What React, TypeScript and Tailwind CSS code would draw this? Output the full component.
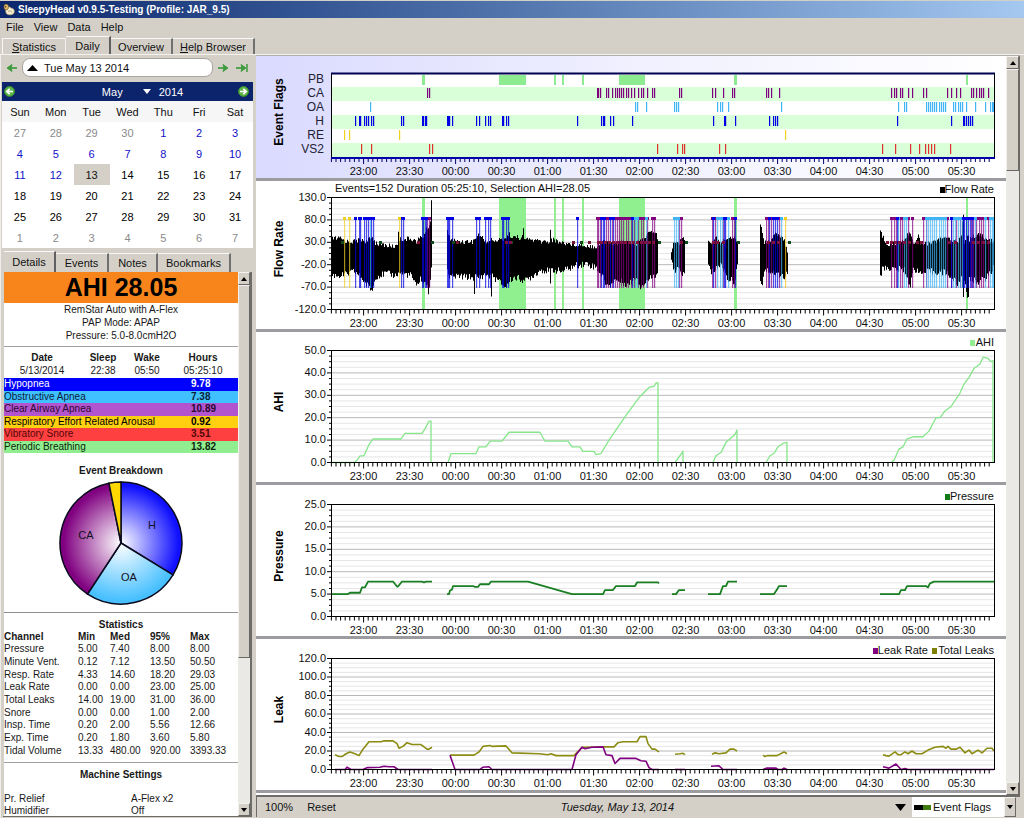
import React from "react";

type Point = [number, number];

const PLOT_LEFT = 75;
const PLOT_RIGHT = 738;
const FONT = "Liberation Sans, Arial, sans-serif";

const HOURS = [
  "23:00", "23:30", "00:00", "00:30", "01:00", "01:30", "02:00",
  "02:30", "03:00", "03:30", "04:00", "04:30", "05:00", "05:30",
];

const breathing: Point[] = [
  [166, 169], [243, 270], [298, 300], [306, 308], [326, 328], [363, 389], [478, 481], [710, 712],
];

const events = {
  CA: [
    171, 173, 341, 342, 344, 350, 352, 356, 359, 361, 363, 365, 367, 370, 372, 375, 378, 382, 385, 387, 391, 396,
    398, 423, 425, 456, 459, 467, 476, 478, 510, 512, 515, 523, 635, 638, 640, 644, 646, 652, 656, 667, 670, 691,
    695, 700, 704, 715, 717, 720, 723, 725, 727, 732,
  ],
  OA: [
    114, 379, 381, 390, 418, 420, 422, 461, 464, 466, 472, 525, 642, 648, 650, 670, 672, 674, 676, 678, 680, 683,
    685, 687, 689, 697, 699, 702, 704, 706, 710, 719, 729, 734, 736, 737,
  ],
  H: [
    99, 103, 104, 108, 110, 112, 115, 117, 145, 147, 166, 167, 169, 170, 191, 192, 193, 196, 220, 223, 229, 232,
    234, 246, 247, 250, 252, 321, 345, 347, 348, 354, 357, 376, 457, 468, 469, 479, 513, 517, 519, 521, 641, 695,
    707, 708, 710, 712, 714, 716,
  ],
  RE: [88, 93, 143, 529],
  VS2: [
    105, 115, 173, 176, 401, 421, 426, 428, 463, 469, 626, 639, 654, 663, 669, 672, 675, 678, 694,
  ],
};

const colors = { CA: "#800080", OA: "#40b4f5", H: "#0000e6", RE: "#f0d020", VS2: "#e03030" };

const snoreMarks = [
  161, 200, 249, 253, 316, 332, 341, 344, 348, 352, 356, 360, 364, 368, 372, 376, 380, 384, 388, 392, 396, 424, 456, 460,
  466, 511, 516, 521, 630, 634, 638, 642, 647, 652, 660, 664, 692, 698, 716, 721, 726, 731,
];
const leakMarks = [85, 123, 175, 196, 254, 324, 402, 429, 481, 532];

const waveform: [number, number, number][][] = [
  [
    [75, 57, 96], [84, 57, 96], [90, 60, 95], [98, 60, 92], [105, 58, 98], [110, 60, 105], [116, 56, 111],
    [119, 61, 97], [130, 64, 94], [139, 65, 96], [141, 62, 94], [142, 49, 95], [143, 58, 93], [155, 57, 96],
    [160, 60, 108], [164, 56, 98], [167, 55, 106], [169, 50, 100], [172, 45, 112], [174, 40, 103], [175, 18, 90],
    [176, 18, 90],
  ],
  [
    [191, 50, 90], [193, 56, 98], [200, 60, 97], [217, 60, 98], [218, 56, 117], [219, 58, 97], [222, 53, 98],
    [230, 60, 95], [234, 60, 98], [235, 56, 114], [236, 60, 97], [245, 58, 104], [250, 56, 108], [253, 53, 101],
    [258, 56, 98], [266, 56, 100], [267, 48, 100], [268, 57, 102], [285, 60, 90], [293, 60, 92], [294, 48, 107],
    [295, 58, 90], [305, 61, 92], [320, 63, 86], [330, 64, 84], [340, 65, 88], [345, 60, 95], [352, 60, 108],
    [358, 62, 100], [372, 60, 105], [380, 62, 97], [384, 60, 107], [392, 52, 100], [399, 50, 95], [402, 60, 90],
  ],
  [[415, 70, 80], [417, 60, 92], [423, 62, 90], [427, 54, 95], [429, 58, 93]],
  [[452, 58, 86], [455, 62, 93], [460, 56, 88], [465, 62, 85], [472, 55, 100], [478, 56, 102], [482, 62, 80]],
  [
    [504, 44, 100], [506, 50, 104], [508, 60, 90], [515, 58, 92], [520, 52, 95], [526, 56, 95], [528, 60, 100],
    [532, 72, 90],
  ],
  [
    [624, 50, 96], [626, 54, 90], [630, 62, 88], [640, 62, 90], [648, 58, 90], [654, 50, 107], [657, 62, 90],
    [662, 54, 90], [664, 62, 95], [670, 62, 92], [690, 56, 93], [702, 60, 105], [705, 52, 98], [707, 32, 117],
    [708, 60, 100], [712, 55, 120], [713, 58, 100], [722, 52, 102], [730, 58, 98], [738, 60, 88],
  ],
];

function jitter(n: number) {
  const v = Math.sin(n * 12.9898) * 43758.5453;
  return v - Math.floor(v);
}

function wavePath(keys: [number, number, number][]) {
  const top: string[] = [];
  const bottom: string[] = [];
  for (let i = 0; i < keys.length - 1; i++) {
    const [x0, t0, b0] = keys[i];
    const [x1, t1, b1] = keys[i + 1];
    for (let x = x0; x < x1; x++) {
      const k = (x - x0) / (x1 - x0);
      const t = t0 + (t1 - t0) * k + jitter(x) * 5 - 2;
      const b = b0 + (b1 - b0) * k - jitter(x + 500) * 7 + 2;
      top.push(`${x},${t.toFixed(1)} ${x + 1},${t.toFixed(1)}`);
      bottom.unshift(`${x + 1},${b.toFixed(1)} ${x},${b.toFixed(1)}`);
    }
  }
  return top.concat(bottom).join(" ");
}

const ahi: Point[][] = [
  [[75, 0], [98, 0], [101, 1], [104, 3], [108, 3], [113, 8], [117, 10.5], [145, 10.5], [149, 13], [166, 13], [169, 15], [173, 18.5], [175, 18.5], [175, 0]],
  [[192, 0], [195, 4], [220, 4], [223, 7], [230, 7], [234, 9.5], [246, 9.5], [253, 13.5], [284, 13.5], [289, 9.5], [312, 9.5], [316, 7], [324, 7], [327, 5], [338, 5], [340, 3.5], [345, 4], [353, 10], [370, 21], [383, 29], [393, 33.5], [398, 34], [400, 35.5], [402, 35.5], [402, 0]],
  [[419, 0], [427, 5], [427, 0]],
  [[457, 0], [460, 3], [465, 4.5], [470, 9], [479, 12.5], [481, 14.5], [481, 0]],
  [[510, 0], [514, 3], [518, 4], [522, 7], [527, 8.5], [531, 9], [531, 0]],
  [[635, 0], [638, 1], [643, 6], [647, 7], [651, 10.5], [658, 11.5], [667, 11.5], [673, 14], [680, 20], [684, 20], [689, 23], [695, 25], [704, 31], [708, 35], [713, 38], [718, 42], [724, 44], [727, 47], [732, 46.5], [735, 45], [737, 45.5], [737, 0]],
];

const pressure: Point[][] = [
  [[75, 5], [92, 5], [94, 5.3], [104, 5.3], [106, 6.5], [109, 6.5], [112, 7.8], [137, 7.8], [141, 6.7], [142, 6.7], [146, 7.8], [166, 7.8], [168, 7.6], [170, 7.8], [176, 7.8]],
  [[191, 5], [193, 5], [194, 5.8], [196, 6], [197, 6.8], [217, 6.8], [219, 6.6], [222, 6.6], [224, 7.2], [233, 7.2], [235, 7.8], [272, 7.8], [316, 5], [347, 5], [349, 5.9], [357, 5.9], [360, 6.8], [379, 6.8], [381, 7.6], [402, 7.6], [403, 7.4]],
  [[416, 5], [420, 5], [423, 5.9], [429, 5.9]],
  [[452, 5], [464, 5], [467, 6.8], [470, 6.8], [472, 7.8], [481, 7.8]],
  [[504, 5], [518, 5], [521, 6], [523, 6.8], [531, 6.8]],
  [[624, 5], [643, 5], [645, 5.9], [649, 5.9], [651, 6.8], [670, 6.8], [672, 6.5], [674, 7.4], [678, 7.8], [738, 7.8]],
];

const totalLeaks: Point[][] = [
  [[79, 16], [83, 14], [86, 14], [90, 17], [94, 19], [99, 17], [103, 15], [107, 22], [113, 30], [125, 30], [128, 31], [137, 31], [141, 28], [143, 23], [147, 25], [151, 29], [156, 27], [165, 27], [171, 22], [173, 22], [176, 24]],
  [[194, 15.5], [218, 15.5], [223, 19], [227, 25], [234, 26], [236, 25], [250, 25.5], [256, 18], [283, 17], [292, 16], [295, 17], [300, 15], [318, 15], [326, 24], [347, 24.5], [358, 24.5], [362, 29], [367, 30], [381, 30], [384, 35.5], [390, 35.5], [392, 28], [396, 22], [399, 22], [403, 19]],
  [[419, 16.5], [424, 17], [427, 17.5], [429, 16]],
  [[456, 16.5], [459, 18], [463, 17], [470, 18], [474, 22], [478, 22], [481, 20]],
  [[507, 15.5], [509, 14], [511, 15], [521, 15], [528, 19], [531, 17]],
  [[627, 16], [630, 15], [633, 14.5], [639, 19], [642, 16], [645, 16], [649, 19], [652, 17], [656, 20], [660, 17], [666, 17], [672, 21], [679, 24], [687, 25], [690, 23], [692, 25], [695, 22], [700, 22], [704, 24], [709, 18], [713, 21], [716, 17], [722, 21], [726, 18], [731, 23], [736, 23], [738, 20]],
];

const leakRate: Point[][] = [
  [[79, 0], [89, 0], [91, 2.5], [95, 0], [107, 0], [111, 2], [124, 2.5], [128, 3.5], [133, 3], [138, 3], [142, 0], [176, 0]],
  [[194, 15.5], [199, 0], [224, 0], [227, 2.5], [233, 3], [236, 0], [316, 0], [320, 16], [326, 24], [329, 22.5], [336, 24], [347, 24.5], [350, 16], [356, 15], [359, 6.5], [364, 12], [380, 12], [385, 9.5], [390, 9], [393, 2], [396, 0], [403, 0]],
  [[419, 0], [429, 0]],
  [[455, 3.5], [463, 4], [467, 0], [481, 0]],
  [[507, 0], [511, 1.5], [520, 1.5], [522, 0], [526, 0], [528, 1.5], [531, 0]],
  [[627, 3], [633, 1.5], [640, 6], [645, 0], [649, 1], [652, 0], [738, 0]],
];

function TimeAxis({ y, color = "#000" }: { y: number; color?: string }) {
  const ticks = Array.from({ length: 144 }, (_, i) => i);
  return (
    <g>
      {ticks.map((i) => {
        const x = 75.4 + i * 4.6;
        return <line key={i} x1={x} x2={x} y1={y} y2={y + (i % 10 === 7 ? 6 : 4)} stroke={color} strokeWidth={1} />;
      })}
      {HOURS.map((h, i) => (
        <text key={h} x={107.5 + i * 46} y={y + 17} fontSize={11} textAnchor="middle" fill="#111">
          {h}
        </text>
      ))}
    </g>
  );
}

function AxisTitle({ y, children }: { y: number; children: string }) {
  return (
    <text x={27} y={y} transform={`rotate(-90 27 ${y})`} fontSize={12} fontWeight={700} textAnchor="middle">
      {children}
    </text>
  );
}

interface PlotProps {
  title: string;
  height: number;
  top: number;
  size: number;
  labels: string[];
  legend: { x: number; end: number; color: string; name: string }[];
  children: React.ReactNode;
}

function Plot({ title, height, top, size, labels, legend, children }: PlotProps) {
  const steps = labels.length - 1;
  const t = top + 0.5;
  const minor = Array.from({ length: steps * 4 + 1 }, (_, i) => i);
  return (
    <section className="border-b-3 border-[#9c9ca0] bg-white" aria-label={title}>
      <svg viewBox={`0 0 750 ${height}`} className="block h-auto w-full" fontFamily={FONT}>
        {minor.map((i) => {
          const y = t + (i * size) / (steps * 4);
          const major = i % 4 === 0;
          return (
            <g key={i}>
              <line x1={PLOT_LEFT} x2={PLOT_RIGHT} y1={y} y2={y} stroke={major ? "#b8b8b8" : "#e6e6e6"} />
              <line x1={major ? 71 : 73} x2={PLOT_LEFT} y1={y} y2={y} stroke="#000" />
            </g>
          );
        })}
        {labels.map((l, i) => (
          <text key={l} x={70} y={t + (i * size) / steps + 3} fontSize={11} textAnchor="end" fill="#111">
            {l}
          </text>
        ))}
        {children}
        <rect x={75.5} y={t} width={663} height={size} fill="none" stroke="#000" />
        <TimeAxis y={t + size} />
        <AxisTitle y={top + size / 2 - 4}>{title}</AxisTitle>
        {legend.map((l) => (
          <g key={l.name}>
            <rect x={l.x} y={top - 10} width={5} height={6} fill={l.color} />
            <text x={l.end} y={top - 4} fontSize={11} textAnchor="end" fill="#111">
              {l.name}
            </text>
          </g>
        ))}
      </svg>
    </section>
  );
}

function Series({ data, top, size, max, color, width = 1.3 }: {
  data: Point[][]; top: number; size: number; max: number; color: string; width?: number;
}) {
  return (
    <g fill="none" stroke={color} strokeWidth={width} strokeLinejoin="round">
      {data.map((s, i) => (
        <polyline key={i} points={s.map(([x, v]) => `${x},${top + 0.5 + size - (v / max) * size}`).join(" ")} />
      ))}
    </g>
  );
}

function EventFlags() {
  const rows = ["PB", "CA", "OA", "H", "RE", "VS2"] as const;
  return (
    <section
      className="border-b-3 border-[#9c9ca0] bg-linear-to-r from-[#dadaff] via-[#f0f0ff] to-white"
      aria-label="Event Flags"
    >
      <svg viewBox="0 0 750 122" className="block h-auto w-full" fontFamily={FONT}>
        {rows.map((r, i) => (
          <g key={r}>
            <rect x={75} y={17 + i * 14} width={663} height={14} fill={i % 2 ? "#d8ffd8" : "#fff"} />
            <text x={68} y={27 + i * 14} fontSize={12} textAnchor="end" fill="#223">
              {r}
            </text>
            {r === "PB"
              ? breathing.map(([a, b]) => (
                  <rect key={a} x={a} y={19} width={b - a} height={10} fill="#8eec90" />
                ))
              : events[r].map((x) => (
                  <rect key={x} x={x} y={18 + i * 14} width={1.2} height={10} fill={colors[r]} />
                ))}
          </g>
        ))}
        <path d="M75.500 17V102M738.500 17V102" stroke="#000" />
        <path d="M75 17.500H739" stroke="#000050" strokeWidth={2} />
        <TimeAxis y={102} color="#00006a" />
        <path d="M75 102H739" stroke="#0000a8" strokeWidth={2} />
        <AxisTitle y={56}>Event Flags</AxisTitle>
      </svg>
    </section>
  );
}

function FlowRate() {
  const order = ["CA", "OA", "H", "RE"] as const;
  return (
    <Plot
      title="Flow Rate"
      height={148}
      top={16}
      size={112}
      labels={["130.0", "80.0", "30.0", "-20.0", "-70.0", "-120.0"]}
      legend={[{ x: 684, end: 738, color: "#000", name: "Flow Rate" }]}
    >
      {breathing.map(([a, b]) => (
        <rect key={a} x={a} y={16} width={b - a} height={112} fill="#90f090" />
      ))}
      <text x={79} y={11} fontSize={11} fill="#111">
        Events=152 Duration 05:25:10, Selection AHI=28.05
      </text>
      {waveform.map((w, i) => (
        <polygon key={i} points={wavePath(w)} fill="#000" />
      ))}
      {order.map((k) => (
        <g key={k} fill={colors[k]}>
          {events[k].map((x) => (
            <g key={x}>
              <rect x={x} y={38} width={1.2} height={69} opacity={0.7} />
              <rect x={x - 1} y={36} width={3} height={3} />
            </g>
          ))}
        </g>
      ))}
      {leakMarks.map((x) => (
        <rect key={x} x={x} y={60} width={3} height={3} fill="#124a1c" />
      ))}
      {snoreMarks.map((x) => (
        <rect key={x} x={x} y={60} width={3} height={3} fill="#80103c" />
      ))}
    </Plot>
  );
}

const calendar = [
  [27, 28, 29, 30, 1, 2, 3],
  [4, 5, 6, 7, 8, 9, 10],
  [11, 12, 13, 14, 15, 16, 17],
  [18, 19, 20, 21, 22, 23, 24],
  [25, 26, 27, 28, 29, 30, 31],
  [1, 2, 3, 4, 5, 6, 7],
];

function dayClass(row: number, day: number) {
  if ((row === 0 && day > 7) || row === 5) return "text-[#8a8a8a]";
  if (row < 2 || (row === 2 && day < 13)) return "text-[#1010c8]";
  if (row === 2 && day === 13) return "bg-[#d4d0c8]";
  return "text-black";
}

function Arrow({ flip, bar }: { flip?: boolean; bar?: boolean }) {
  return (
    <svg width="12" height="10" viewBox="0 0 12 10" className={flip ? "-scale-x-100" : ""} aria-hidden="true">
      <path d="M0 5H7" fill="none" stroke="#46a046" strokeWidth="1.800" />
      <path d="M5 1.500L10 5L5 8.500L6 5Z" fill="#3c9a3c" stroke="#3c9a3c" strokeWidth=".9" />
      {bar && <path d="M11 1V9" stroke="#3c9a3c" strokeWidth="1.500" />}
    </svg>
  );
}

function RoundArrow({ flip }: { flip?: boolean }) {
  return (
    <svg width="11" height="11" viewBox="0 0 11 11" className={flip ? "-scale-x-100" : ""} aria-hidden="true">
      <circle cx="5.500" cy="5.500" r="5" fill="#5cb548" stroke="#3d8a30" />
      <path d="M2 5.500H8M5.300 2.800L8.200 5.500L5.300 8.200" fill="none" stroke="#fff" strokeWidth="1.700" />
    </svg>
  );
}

function Calendar() {
  return (
    <div className="ml-px bg-white">
      <div className="flex h-[19px] items-center bg-[#0c246c] pr-[4px] pl-[2px] text-white">
        <button aria-label="Previous month"><RoundArrow flip /></button>
        <div className="flex flex-1 items-center justify-center gap-2 pl-[32px]">
          <button className="flex items-center gap-5">
            May
            <svg width="8" height="5" viewBox="0 0 8 5" aria-hidden="true"><path d="M0 0H8L4 5Z" fill="#fff" /></svg>
          </button>
          <button>2014</button>
        </div>
        <button aria-label="Next month"><RoundArrow /></button>
      </div>
      <table className="w-full table-fixed border-collapse text-center">
        <thead>
          <tr className="h-[21px] bg-[#f6f6f6]">
            {["Sun", "Mon", "Tue", "Wed", "Thu", "Fri", "Sat"].map((d) => (
              <th key={d} className="p-0 font-normal">{d}</th>
            ))}
          </tr>
        </thead>
        <tbody>
          {calendar.map((week, r) => (
            <tr key={r} className="h-[21px]">
              {week.map((d) => (
                <td key={d} className={`p-0 ${dayClass(r, d)}`}>{d}</td>
              ))}
            </tr>
          ))}
        </tbody>
      </table>
    </div>
  );
}

function ScrollButton({ down, label }: { down?: boolean; label: string }) {
  return (
    <button
      aria-label={label}
      className="flex h-[13px] w-full shrink-0 items-center justify-center border border-t-[#f4f2ee] border-r-[#6a6864] border-b-[#6a6864] border-l-[#f4f2ee] bg-[#d4d0c8]"
    >
      <svg width="6" height="4" viewBox="0 0 6 4" className={down ? "rotate-180" : ""} aria-hidden="true">
        <path d="M0 4H6L3 0Z" fill="#000" />
      </svg>
    </button>
  );
}

const slices = [
  { name: "H", color: "#1010ff", value: 9.78, x: 93, y: 48 },
  { name: "OA", color: "#48c0ff", value: 7.38, x: 70, y: 100 },
  { name: "CA", color: "#800080", value: 10.89, x: 27, y: 58 },
  { name: "", color: "#ffd700", value: 0.92, x: 0, y: 0 },
];

function Pie() {
  const total = slices.reduce((s, v) => s + v.value, 0);
  let angle = -Math.PI / 2;
  const paths = slices.map((s) => {
    const a0 = angle;
    angle += (s.value / total) * Math.PI * 2;
    const p = (a: number) => `${62 + 61 * Math.cos(a)} ${62 + 61 * Math.sin(a)}`;
    return { ...s, d: `M62 62L${p(a0)}A61 61 0 0 1 ${p(angle)}Z` };
  });
  return (
    <svg width="124" height="124" viewBox="0 0 124 124" className="mx-auto block" fontFamily={FONT} role="img" aria-label="Event Breakdown">
      <defs>
        {paths.map((p, i) => (
          <radialGradient key={i} id={`slice${i}`} gradientUnits="userSpaceOnUse" cx="62" cy="62" r="64">
            <stop offset="0" stopColor={i === 3 ? p.color : "#fff"} />
            <stop offset="0.900" stopColor={p.color} />
          </radialGradient>
        ))}
      </defs>
      {paths.map((p, i) => (
        <path key={i} d={p.d} fill={`url(#slice${i})`} stroke="#0a0a1e" strokeWidth="1.500" />
      ))}
      {paths.filter((p) => p.name).map((p) => (
        <text key={p.name} x={p.x} y={p.y} textAnchor="middle" fontSize="11" fill="#112">
          {p.name}
        </text>
      ))}
    </svg>
  );
}

const indices = [
  { name: "Hypopnea", value: "9.78", cls: "bg-[#0000ff] text-white" },
  { name: "Obstructive Apnea", value: "7.38", cls: "bg-[#40c0ff] text-[#082038]" },
  { name: "Clear Airway Apnea", value: "10.89", cls: "bg-[#b254cd] text-[#2a0830]" },
  { name: "Respiratory Effort Related Arousal", value: "0.92", cls: "bg-[#ffd010] text-black" },
  { name: "Vibratory Snore", value: "3.51", cls: "bg-[#ff4040] text-[#500808]" },
  { name: "Periodic Breathing", value: "13.82", cls: "bg-[#90ee90] text-[#0c280c]" },
];

const stats = [
  ["Pressure", "5.00", "7.40", "8.00", "8.00"],
  ["Minute Vent.", "0.12", "7.12", "13.50", "50.50"],
  ["Resp. Rate", "4.33", "14.60", "18.20", "29.03"],
  ["Leak Rate", "0.00", "0.00", "23.00", "25.00"],
  ["Total Leaks", "14.00", "19.00", "31.00", "36.00"],
  ["Snore", "0.00", "0.00", "1.00", "2.00"],
  ["Insp. Time", "0.20", "2.00", "5.56", "12.66"],
  ["Exp. Time", "0.20", "1.80", "3.60", "5.80"],
  ["Tidal Volume", "13.33", "480.00", "920.00", "3393.33"],
];

function Details() {
  return (
    <div className="min-w-0 flex-1 overflow-hidden bg-white text-[10px] leading-[12px] text-[#181818]">
      <h1 className="bg-[#f8841c] text-center text-[25px] leading-[31px] font-bold text-black">AHI 28.05</h1>
      <div className="text-center leading-[13px]">
        <p>RemStar Auto with A-Flex</p>
        <p>PAP Mode: APAP</p>
        <p>Pressure: 5.0-8.0cmH2O</p>
      </div>
      <hr className="mt-[4px] border-[#a0a0a0]" />
      <table className="mt-[5px] h-[26px] w-full table-fixed border-collapse text-center">
        <colgroup>
          <col className="w-[76px]" />
          <col className="w-[46px]" />
          <col className="w-[42px]" />
          <col />
        </colgroup>
        <thead>
          <tr>
            {["Date", "Sleep", "Wake", "Hours"].map((h) => <th key={h} className="p-0">{h}</th>)}
          </tr>
        </thead>
        <tbody>
          <tr>
            {["5/13/2014", "22:38", "05:50", "05:25:10"].map((h) => <td key={h} className="p-0">{h}</td>)}
          </tr>
        </tbody>
      </table>
      <table className="h-[75px] w-full border-collapse">
        <tbody>
          {indices.map((r) => (
            <tr key={r.name} className={r.cls}>
              <td className="p-0">{r.name}</td>
              <td className="w-[47px] p-0 font-bold">{r.value}</td>
            </tr>
          ))}
        </tbody>
      </table>
      <h2 className="mt-[12px] mb-[4px] text-center font-bold">Event Breakdown</h2>
      <Pie />
      <hr className="mt-[7px] border-[#909090]" />
      <h2 className="mt-[6px] text-center font-bold">Statistics</h2>
      <table className="h-[126px] w-full table-fixed border-collapse text-left">
        <colgroup>
          <col className="w-[74px]" />
          <col className="w-[32px]" />
          <col className="w-[40px]" />
          <col className="w-[40px]" />
          <col />
        </colgroup>
        <thead>
          <tr>
            {["Channel", "Min", "Med", "95%", "Max"].map((h) => <th key={h} className="p-0">{h}</th>)}
          </tr>
        </thead>
        <tbody>
          {stats.map((r) => (
            <tr key={r[0]}>
              {r.map((c, i) => <td key={i} className="p-0 whitespace-nowrap">{c}</td>)}
            </tr>
          ))}
        </tbody>
      </table>
      <hr className="mt-[5px] border-[#a0a0a0]" />
      <h2 className="mt-[6px] text-center font-bold">Machine Settings</h2>
      <dl className="mt-[13px] grid grid-cols-[127px_1fr] gap-y-[2px] leading-[10px]">
        <dt>Pr. Relief</dt>
        <dd>A-Flex x2</dd>
        <dt>Humidifier</dt>
        <dd>Off</dd>
      </dl>
    </div>
  );
}

function Tab({ active, first, className, children }: { active?: boolean; first?: boolean; className: string; children: React.ReactNode }) {
  return (
    <button
      role="tab"
      aria-selected={!!active}
      className={`shrink-0 border-t border-t-[#f8f8f6] ${active ? "border-r-2 border-r-[#606060]" : first ? "border-r border-r-[#f0f0ee]" : "mt-[2px] border-r-2 border-r-[#707070]"} ${first ? "mt-[2px] border-l border-l-[#f8f8f6]" : ""} ${className}`}
    >
      {children}
    </button>
  );
}

export default function App() {
  return (
    <div className="flex h-screen flex-col overflow-hidden bg-[#d4d0c8] font-['Liberation_Sans',Arial,sans-serif] text-[11px] leading-[14px] text-[#111]">
      <header className="flex h-[18px] shrink-0 items-center gap-[3px] border-t border-[#d4d0c8] bg-linear-to-r from-[#0c266c] to-[#a4c8f0] pl-[3px]">
        <svg width="12" height="13" viewBox="0 0 12 13" aria-hidden="true">
          <path d="M2 5C3 3 6 3 8 5C11 5 12 8 11 10C10 12.500 4 12.500 3 10Z" fill="#f4ecd0" stroke="#9a8858" strokeWidth=".6" />
          <path d="M1 2.500C2 .5 5 .8 5.500 3L5 6C4 7.500 1.500 7 1 5Z" fill="#e8c068" stroke="#5c4820" strokeWidth=".7" />
          <circle cx="2.600" cy="3.800" r=".7" fill="#222" />
          <path d="M5 8.500C6.500 7.500 8.500 8 9 9.500" fill="none" stroke="#a8946a" strokeWidth=".8" />
        </svg>
        <span className="text-[10px] leading-[14px] font-bold text-white">SleepyHead v0.9.5-Testing (Profile: JAR_9.5)</span>
      </header>
      <nav className="flex h-[18px] shrink-0 items-center gap-[10px] pl-[6px]">
        <button>File</button>
        <button>View</button>
        <button>Data</button>
        <button>Help</button>
      </nav>
      <div className="flex h-[19px] shrink-0 border-b border-[#f4f2ee] pl-[2px]" role="tablist">
        <Tab first className="w-[64px]"><u>S</u>tatistics</Tab>
        <Tab active className="w-[45px]">Daily</Tab>
        <Tab className="w-[62px]">Overview</Tab>
        <Tab className="w-[82px]"><u>H</u>elp Browser</Tab>
      </div>

      <div className="flex min-h-0 flex-1">
        <aside className="flex w-[256px] shrink-0 flex-col border-l border-[#f0eeea] pr-[3px]">
          <div className="flex h-[27px] shrink-0 items-center gap-[5px] px-[4px] pb-[2px]">
            <button aria-label="Previous day"><Arrow flip /></button>
            <button className="flex h-[19px] w-[191px] items-center gap-[6px] rounded-[8px] border border-[#a8a6a0] bg-white pl-[4px]">
              <svg width="11" height="6" viewBox="0 0 11 6" aria-hidden="true"><path d="M0 6H11L5.500 0Z" fill="#000" /></svg>
              Tue May 13 2014
            </button>
            <button aria-label="Next day"><Arrow /></button>
            <button aria-label="Latest day" className="ml-px"><Arrow bar /></button>
          </div>
          <Calendar />
          <div className="mt-[3px] flex h-[21px] shrink-0 pl-[3px]" role="tablist">
            <Tab active className="w-[52px]">Details</Tab>
            <Tab className="w-[53px]">Events</Tab>
            <Tab className="w-[49px]">Notes</Tab>
            <Tab className="w-[73px]">Bookmarks</Tab>
          </div>
          <div className="mr-px mb-px ml-[2px] flex min-h-0 flex-1 border-r-2 border-b border-[#6e6c68] pl-px">
            <Details />
            <div className="flex w-[12px] shrink-0 flex-col bg-[#ebe9e5]">
              <ScrollButton label="Scroll details up" />
              <div className="h-[373px] border border-t-[#f4f2ee] border-r-[#6a6864] border-b-[#6a6864] border-l-[#f4f2ee] bg-[#d4d0c8]" />
              <div className="flex-1" />
              <ScrollButton down label="Scroll details down" />
            </div>
          </div>
        </aside>

        <main className="flex min-w-0 flex-1 flex-col pr-[4px]">
          <div className="flex min-h-0 flex-1 overflow-hidden border-t border-[#b0aea8] bg-white">
            <div className="min-w-0 flex-1">
              <EventFlags />
              <FlowRate />
              <Plot
                title="AHI"
                height={150}
                top={18}
                size={112}
                labels={["50.0", "40.0", "30.0", "20.0", "10.0", "0.0"]}
                legend={[{ x: 714, end: 738, color: "#90ee90", name: "AHI" }]}
              >
                <Series data={ahi} top={18} size={112} max={50} color="#86e68a" />
              </Plot>
              <Plot
                title="Pressure"
                height={151}
                top={19}
                size={112}
                labels={["25.0", "20.0", "15.0", "10.0", "5.0", "0.0"]}
                legend={[{ x: 689, end: 738, color: "#0e7a18", name: "Pressure" }]}
              >
                <Series data={pressure} top={19} size={112} max={25} color="#1a7e22" width={1.8} />
              </Plot>
              <Plot
                title="Leak"
                height={151}
                top={19}
                size={111}
                labels={["120.0", "100.0", "80.0", "60.0", "40.0", "20.0", "0.0"]}
                legend={[
                  { x: 617, end: 672, color: "#800080", name: "Leak Rate" },
                  { x: 676, end: 738, color: "#808000", name: "Total Leaks" },
                ]}
              >
                <Series data={totalLeaks} top={19} size={111} max={120} color="#8c8c14" width={1.6} />
                <Series data={leakRate} top={19} size={111} max={120} color="#800080" width={1.6} />
              </Plot>
            </div>
            <div className="flex w-[14px] shrink-0 flex-col border-r border-[#6e6c68] bg-[#ebe9e5]">
              <ScrollButton label="Scroll charts up" />
              <div className="h-[102px] border border-t-[#f4f2ee] border-r-[#6a6864] border-b-[#6a6864] border-l-[#f4f2ee] bg-[#d4d0c8]" />
              <div className="flex-1" />
              <ScrollButton down label="Scroll charts down" />
            </div>
          </div>
          <footer className="mb-px flex h-[22px] shrink-0 items-center border-t-2 border-l border-[#6e6c68] pr-[4px] pl-[8px]">
            <button className="mr-[14px]">100%</button>
            <button>Reset</button>
            <span className="flex-1 pl-[4px] text-center italic">Tuesday, May 13, 2014</span>
            <svg width="11" height="7" viewBox="0 0 11 7" className="mr-[6px]" aria-hidden="true"><path d="M0 0H11L5.500 7Z" fill="#000" /></svg>
            <div className="relative flex h-full w-[104px] bg-white">
              <svg width="17" height="5" viewBox="0 0 17 5" className="pointer-events-none absolute top-[8px] left-[2px]" aria-hidden="true">
                <path d="M0 0H9V5H0Z" fill="#000" />
                <path d="M9 0H17V5H9Z" fill="#3f7a10" />
              </svg>
              <select aria-label="Graph" className="h-full w-full appearance-none bg-transparent pl-[21px]">
                <option>Event Flags</option>
              </select>
              <span className="pointer-events-none absolute top-0 right-0 flex h-full w-[12px] items-center justify-center border border-t-[#f4f2ee] border-r-[#6a6864] border-b-[#6a6864] border-l-[#f4f2ee] bg-[#d4d0c8]">
                <svg width="6" height="4" viewBox="0 0 6 4" aria-hidden="true"><path d="M0 0H6L3 4Z" fill="#000" /></svg>
              </span>
            </div>
          </footer>
        </main>
      </div>
    </div>
  );
}
